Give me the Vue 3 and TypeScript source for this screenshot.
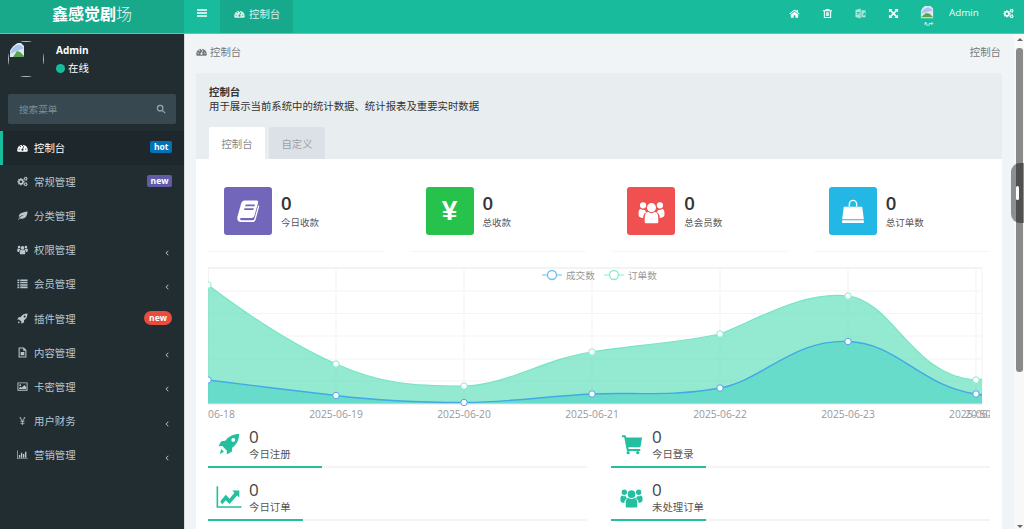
<script setup lang="ts">
function gear(cx: number, cy: number, r: number, teeth: number): string {
  const pts: string[] = [];
  const n = teeth * 4;
  for (let i = 0; i < n; i++) {
    const a = (i / n) * Math.PI * 2 - Math.PI / n;
    const rad = i % 4 < 2 ? r : r * 0.76;
    pts.push(`${(cx + rad * Math.cos(a)).toFixed(2)} ${(cy + rad * Math.sin(a)).toFixed(2)}`);
  }
  const h = r * 0.36;
  return `M${pts.join('L')}Z M${cx - h} ${cy}a${h} ${h} 0 1 0 ${2 * h} 0a${h} ${h} 0 1 0 ${-2 * h} 0Z`;
}

const icons: Record<string, string> = {
  dashboard:
    'M.5 17.500a11.500 11.500 0 1 1 23 0c0 1.800-.5 3.500-1.500 3.500H2C1 21 .5 19.300.5 17.500z M3.300 15.500a1.400 1.400 0 1 0 2.800 0 1.400 1.400 0 1 0-2.800 0z M5.800 10a1.400 1.400 0 1 0 2.800 0 1.400 1.400 0 1 0-2.800 0z M10.600 7.500a1.400 1.400 0 1 0 2.800 0 1.400 1.400 0 1 0-2.800 0z M17.900 15.500a1.400 1.400 0 1 0 2.800 0 1.400 1.400 0 1 0-2.800 0z M9.700 17a2.300 2.300 0 0 0 4.600 0c0-.9-.5-1.600-1.100-2l2.600-5.800-1.400-.6-2.600 6.100A2.300 2.300 0 0 0 9.700 17z',
  cogs: `${gear(8.5, 12.5, 8, 8)} ${gear(19, 6, 4.5, 6)} ${gear(19, 18, 4.5, 6)}`,
  leaf: 'M2.500 21C4 17.500 8 13.500 15 11 9.500 11.500 6 14 4.200 16 2.800 8.500 11 5 23 3.500 22.500 12 19 19 11 19c-2 0-3.700-.5-5-1.200L4 21.500z',
  group:
    'M8 8.500a4 4 0 1 0 8 0 4 4 0 1 0-8 0z M1.700 6.500a2.800 2.800 0 1 0 5.600 0 2.800 2.800 0 1 0-5.600 0z M16.700 6.500a2.800 2.800 0 1 0 5.600 0 2.800 2.800 0 1 0-5.600 0z M6 21.500v-4.200c0-3 1.400-4.800 3.200-4.800 1.600 1.300 4 1.300 5.600 0 1.800 0 3.200 1.800 3.200 4.800v4.200c0 .6-.5 1-1.500 1h-9c-1 0-1.500-.4-1.500-1z M.5 13c0-2 .8-3.200 2-3.200 1.100.9 2.400 1.200 3.700.8.200 1 .7 1.700 1.300 2.100-1.700.7-2.800 2.400-3 5C2 17.500.5 16.500.5 15z M23.500 13c0-2-.8-3.200-2-3.200-1.100.9-2.400 1.200-3.700.8-.2 1-.7 1.700-1.300 2.100 1.700.7 2.800 2.400 3 5 1.500-.2 4-1.200 4-2.700z',
  list: 'M1 3h4v3.500H1z M7 3h16v3.500H7z M1 8.200h4v3.500H1z M7 8.200h16v3.500H7z M1 13.400h4v3.500H1z M7 13.400h16v3.500H7z M1 18.600h4v3.500H1z M7 18.600h16v3.500H7z',
  rocket:
    'M23 1C16.500 1 11.500 3.500 8 8.500L3.500 9 .5 14.500l4.200-.2 5 5-.2 4.200L15 20.500l.5-4.500C20.500 12.500 23 7.500 23 1z M14.600 7.500a2.100 2.100 0 1 0 4.200 0 2.100 2.100 0 1 0-4.200 0z M3.500 17.500l3 3-4.500 2.500z',
  file: 'M3.500 1H15l5.500 5.500V23H3.500z M5.800 3.200v17.600h12.400V8H13.500V3.200z M8 11h8v7H8z',
  image:
    'M1 3h22v18H1z M3 5v14h18V5z M5 9a2 2 0 1 0 4 0 2 2 0 1 0-4 0z M4.500 17.500v-2l3.500-3 2.500 2 5.500-6 4 4.500v4.500z',
  chart: 'M.5 3H2v17.500h21.500V22H.5z M4 13h3v6H4z M8.500 8h3v11h-3z M13 11h3v8h-3z M17.500 6h3v13h-3z',
  bars: 'M2 4.500h20v3H2z M2 10.500h20v3H2z M2 16.500h20v3H2z',
  home: 'M12 3 .8 12.800l1.400 1.600L12 6l9.800 8.400 1.400-1.600L19.500 9.600V4.500h-3.200v2.300z M12 8 4 14.800V21.500h6v-5.500h4v5.500h6v-6.700z',
  trash:
    'M8.500 2h7L17 5h5v2.200h-2V22H4V7.200H2V5h5z M10 4.200 9.500 5h5L14 4.200z M6.300 7.200v12.600h11.400V7.200z M8.500 9.500h1.800v8H8.500z M13.700 9.500h1.800v8h-1.800z M11.100 9.500h1.800v8h-1.800z',
  language:
    'M1 4.500 12.500 1v22L1 19.500z M4 8.500v1.700h2.300c-.4 1.800-1.200 3-2.500 4l1 1.100c1.200-.9 2-2 2.600-3.200.5 1 1.200 2 2 2.600l.8-1.200c-.8-.7-1.500-1.500-1.900-2.800h1.500V8.500z M14 5h9v15h-9z M17.500 16.500h1.500l.4-1.500h1.700l.4 1.500h1.500L20.900 9h-1.500z',
  arrows:
    'M2 2h8L7.300 4.700 12 9.400l4.700-4.700L14 2h8v8l-2.700-2.700L14.600 12l4.700 4.700L22 14v8h-8l2.700-2.700L12 14.600l-4.700 4.700L10 22H2v-8l2.700 2.700L9.400 12 4.700 7.300 2 10z',
  search:
    'M10 2a8 8 0 1 0 0 16 8 8 0 0 0 0-16z M10 4.800a5.200 5.200 0 1 1 0 10.400 5.200 5.200 0 0 1 0-10.400z M15 16.800l1.900-1.900 6.100 6.100-1.900 1.900z',
  left: 'M14.500 6 8.500 12l6 6 1.300-1.200-4.800-4.800 4.800-4.800z',
  book: 'M8.500 1.500h12c1.300 0 2 1 1.600 2.300l-3.600 12.700c-.5 1.700-1.500 2.500-3.200 2.500H5.500c-1.900 0-1.900 2.200 0 2.200h11c1 0 1.600-.5 1.900-1.500L22.300 6.200l1 .9L19.700 20.400c-.5 1.700-1.800 2.700-3.400 2.700H5c-3 0-4.300-2.800-3.500-5.500L5 5c.6-2.200 1.800-3.500 3.500-3.500z M9.700 5.500l-.5 1.700h9.300l.5-1.700z M8.500 9.300 8 11h9.300l.5-1.700z',
  bag: 'M3.500 8H20.500L22 19.500H2z M8 8.500V5.500a4 4 0 0 1 8 0v3h-1.300V5.500a2.700 2.700 0 0 0-5.400 0v3z M2 20.500h20V23H2z',
  cart: 'M1 2.500h4l.8 2.500H23l-1.800 10.500H8l.4 2H21v2H6.500L3.500 4.500H1z M6 21.500a1.800 1.800 0 1 0 3.600 0 1.800 1.800 0 1 0-3.600 0z M16.500 21.500a1.800 1.800 0 1 0 3.600 0 1.800 1.800 0 1 0-3.600 0z',
  linechart:
    'M.5 2H2v18.500h21.500V22H.5z M4 16l5-6 3.500 3.500 4.500-5.500-2-2h6.500v6.500l-2-2-7 8-3.500-3.500-3.300 4z',
};

function rule(name: string): 'nonzero' | 'evenodd' {
  return name === 'group' ? 'nonzero' : 'evenodd';
}

interface MenuItem {
  label: string;
  icon?: string;
  glyph?: string;
  badge?: string;
  badgeClass?: string;
  caret?: boolean;
  active?: boolean;
}

const menu: MenuItem[] = [
  { label: '控制台', icon: 'dashboard', badge: 'hot', badgeClass: 'blue', active: true },
  { label: '常规管理', icon: 'cogs', badge: 'new', badgeClass: 'violet' },
  { label: '分类管理', icon: 'leaf' },
  { label: '权限管理', icon: 'group', caret: true },
  { label: '会员管理', icon: 'list', caret: true },
  { label: '插件管理', icon: 'rocket', badge: 'new', badgeClass: 'pill' },
  { label: '内容管理', icon: 'file', caret: true },
  { label: '卡密管理', icon: 'image', caret: true },
  { label: '用户财务', glyph: '¥', caret: true },
  { label: '营销管理', icon: 'chart', caret: true },
];

const topIcons = ['home', 'trash', 'language', 'arrows'];

const stats = [
  { label: '今日收款', icon: 'book', color: 'purple' },
  { label: '总收款', glyph: '¥', color: 'green' },
  { label: '总会员数', icon: 'group', color: 'red' },
  { label: '总订单数', icon: 'bag', color: 'sky' },
];

const minis = [
  { label: '今日注册', icon: 'rocket', bar: 114 },
  { label: '今日登录', icon: 'cart', bar: 95 },
  { label: '今日订单', icon: 'linechart', bar: 95 },
  { label: '未处理订单', icon: 'group', bar: 95 },
];

// chart coordinates: reference x − 208, y − 267
const xs = [0, 128, 256, 384, 512, 640, 768];
const green = [18, 97, 119, 85, 67, 29, 113];
const blue = [113, 128.5, 135.5, 127, 121, 74.5, 127];
const base = 137;

const greenLine =
  'M0 18 C45 52 85 78 128 97 C173 117 205 119 256 119 C300 118 335 92 384 85 C410 80 470 76 512 67 C550 52 595 24 640 29 C685 34 705 110 768 113 L774 112';
const blueLine =
  'M0 113 C40 118 90 124 128 128.5 C165 133 200 135.5 256 135.5 C300 135.5 340 129 384 127 C420 125 465 130 512 121 C555 113 585 72 640 74.5 C690 76 710 118 768 127 L774 128';
const greenArea = `${greenLine} L774 ${base} L0 ${base} Z`;
const blueArea = `${blueLine} L774 ${base} L0 ${base} Z`;
const hLines = [24, 46.5, 69, 92, 114];
const vLines = [128, 256, 384, 512, 640, 768];
const dateLabels = ['2025-06-19', '2025-06-20', '2025-06-21', '2025-06-22', '2025-06-23'];
</script>

<template>
  <div class="page">
    <header class="topbar">
      <div class="logo"><b>鑫感觉剧</b><span>场</span></div>
      <nav class="topnav">
        <button class="toggle" type="button">
          <svg class="icon" viewBox="0 0 24 24"><path :d="icons.bars" /></svg>
        </button>
        <div class="toptab">
          <svg class="icon" viewBox="0 0 24 24"><path :d="icons.dashboard" fill-rule="evenodd" /></svg>
          <span>控制台</span>
        </div>
        <div class="topright">
          <svg
            v-for="name in topIcons"
            :key="name"
            class="icon topicon"
            :class="{ tinted: name === 'language' }"
            viewBox="0 0 24 24"
          >
            <path :d="icons[name]" fill-rule="evenodd" />
          </svg>
          <div class="topavatar">
            <svg viewBox="0 0 16 16" class="broken small">
              <path d="M1 1h11l3 3v11H1z" fill="#dfe8f5" />
              <path d="M1 14l6-5 4 1 4 4z" fill="#5aa34a" />
              <path d="M1 10c2-5 6-8 10-7l4 3" fill="#a9c6ee" />
            </svg>
            <span class="alt">Adm</span>
          </div>
          <span class="topname">Admin</span>
          <svg class="icon topicon cog" viewBox="0 0 24 24"><path :d="icons.cogs" fill-rule="evenodd" /></svg>
        </div>
      </nav>
    </header>

    <div class="main">
      <aside class="sidebar">
        <div class="user">
          <div class="avatar">
            <div class="avatar-frame">
              <svg viewBox="0 0 16 16" class="broken">
                <path d="M1 1h11l3 3v11H1z" fill="#dfe8f5" />
                <path d="M4 15l4-6 3 1 4 4v1z" fill="#5aa34a" />
                <path d="M1 12c2-6 6-10 10-9l4 3" fill="#a9c6ee" />
              </svg>
            </div>
          </div>
          <div class="uinfo">
            <div class="uname">Admin</div>
            <div class="ustate"><i class="dot"></i>在线</div>
          </div>
        </div>
        <div class="search">
          <span>搜索菜单</span>
          <svg class="icon" viewBox="0 0 24 24"><path :d="icons.search" fill-rule="evenodd" /></svg>
        </div>
        <ul class="menu">
          <li v-for="m in menu" :key="m.label" :class="{ active: m.active }">
            <span class="micon">
              <svg v-if="m.icon" class="icon" viewBox="0 0 24 24"><path :d="icons[m.icon]" :fill-rule="rule(m.icon)" /></svg>
              <b v-else>{{ m.glyph }}</b>
            </span>
            <span class="mlabel">{{ m.label }}</span>
            <span v-if="m.badge" class="badge" :class="m.badgeClass">{{ m.badge }}</span>
            <svg v-if="m.caret" class="icon caret" viewBox="0 0 24 24"><path :d="icons.left" /></svg>
          </li>
        </ul>
      </aside>

      <main class="content">
        <div class="crumbs">
          <div class="crumb-left">
            <svg class="icon" viewBox="0 0 24 24"><path :d="icons.dashboard" fill-rule="evenodd" /></svg>
            <span>控制台</span>
          </div>
          <span>控制台</span>
        </div>

        <section class="panel">
          <div class="panel-head">
            <div class="ptitle">控制台</div>
            <div class="pdesc">用于展示当前系统中的统计数据、统计报表及重要实时数据</div>
            <div class="tabs">
              <span class="tab on">控制台</span>
              <span class="tab">自定义</span>
            </div>
          </div>
          <div class="panel-body">
            <div class="stats">
              <div v-for="s in stats" :key="s.label" class="stat">
                <div class="sbox" :class="s.color">
                  <svg v-if="s.icon" class="icon" :class="'s-' + s.icon" viewBox="0 0 24 24"><path :d="icons[s.icon]" :fill-rule="rule(s.icon)" /></svg>
                  <b v-else>{{ s.glyph }}</b>
                </div>
                <div>
                  <div class="snum">0</div>
                  <div class="slabel">{{ s.label }}</div>
                </div>
              </div>
            </div>

            <svg class="chart" viewBox="0 0 782 155" width="782" height="155">
              <rect x="0" y="0" width="774" height="2" fill="#f3f3f3" />
              <rect x="0" y="0" width="1" height="137" fill="#f3f3f3" />
              <rect x="773.5" y="0" width="1" height="137" fill="#f3f3f3" />
              <line v-for="y in hLines" :key="'h' + y" x1="0" x2="774" :y1="y" :y2="y" stroke="#f3f3f3" stroke-width="1" />
              <line v-for="x in vLines" :key="'v' + x" :x1="x" :x2="x" y1="0" y2="137" stroke="#f3f3f3" stroke-width="1" />
              <path :d="greenArea" fill="#62e0bb" fill-opacity=".68" />
              <path :d="blueArea" fill="#3fcfc4" fill-opacity=".52" />
              <path :d="greenLine" fill="none" stroke="#74e4c4" stroke-width="1.2" />
              <path :d="blueLine" fill="none" stroke="#42a8e6" stroke-width="1.4" />
              <line x1="0" x2="774" y1="137" y2="137" stroke="#e3e6e8" stroke-width="1" />
              <circle v-for="(y, i) in green" :key="'g' + i" :cx="xs[i]" :cy="y" r="3.2" fill="#fff" stroke="#8beccd" />
              <circle v-for="(y, i) in blue" :key="'b' + i" :cx="xs[i]" :cy="y" r="3.2" fill="#fff" stroke="#4aa8e8" />
              <g class="legend">
                <line x1="334" x2="354" y1="8" y2="8" stroke="#6cc0f0" />
                <circle cx="344" cy="8" r="4.5" fill="#fff" stroke="#6cc0f0" stroke-width="1.3" />
                <text x="358" y="11.5">成交数</text>
                <line x1="396" x2="416" y1="8" y2="8" stroke="#8beccd" />
                <circle cx="406" cy="8" r="4.5" fill="#fff" stroke="#8beccd" stroke-width="1.3" />
                <text x="420" y="11.5">订单数</text>
              </g>
              <g class="axis">
                <text x="0" y="151">06-18</text>
                <text v-for="(d, i) in dateLabels" :key="d" :x="xs[i + 1]" y="151" text-anchor="middle">{{ d }}</text>
                <text x="741" y="151">2025-06-</text>
                <text x="757" y="151">20:50:</text>
              </g>
            </svg>

            <div class="minis">
              <div v-for="m in minis" :key="m.label" class="mini">
                <div class="mrow">
                  <span class="mi"><svg class="icon" :class="'m-' + m.icon" viewBox="0 0 24 24"><path :d="icons[m.icon]" :fill-rule="rule(m.icon)" /></svg></span>
                  <div>
                    <div class="mnum">0</div>
                    <div class="mtext">{{ m.label }}</div>
                  </div>
                </div>
                <div class="track"><div class="fill" :style="{ width: m.bar + 'px' }"></div></div>
              </div>
            </div>
          </div>
        </section>
      </main>

      <div class="scrollbar">
        <i class="up"></i>
        <div class="thumb"></div>
        <div class="rest"></div>
        <i class="down"></i>
      </div>
      <div class="handle"><i></i></div>
    </div>
  </div>
</template>

<style scoped>
.page {
  width: 1024px;
  height: 529px;
  display: flex;
  flex-direction: column;
  overflow: hidden;
  font-family: "Open Sans", "Noto Sans CJK SC", sans-serif;
  font-size: 10.4px;
  color: #333;
  background: #f1f4f6;
}
.icon {
  width: 11px;
  height: 11px;
  fill: currentColor;
  display: block;
  flex: none;
}
.topbar {
  display: flex;
  height: 34px;
  box-sizing: border-box;
  flex: none;
  border-bottom: 1px solid #4fcdb5;
  color: #fff;
}
.logo {
  width: 184px;
  background: #18a98b;
  display: flex;
  align-items: center;
  justify-content: center;
  font-size: 16px;
  padding-bottom: 8px;
  box-sizing: border-box;
}
.logo b {
  font-weight: 700;
}
.logo span {
  font-weight: 300;
  opacity: 0.9;
}
.topnav {
  flex: 1;
  display: flex;
  align-items: stretch;
  background: #18bc9c;
}
.toggle {
  width: 36px;
  padding: 0 0 8px;
  border: 0;
  background: transparent;
  color: #fff;
  display: flex;
  align-items: center;
  justify-content: center;
}
.toggle .icon {
  width: 12px;
  height: 12px;
}
.toptab {
  width: 73px;
  background: #17a98c;
  display: flex;
  align-items: center;
  gap: 4px;
  padding: 0 0 7px 14px;
  box-sizing: border-box;
  color: #d6f2ec;
}
.topright {
  margin-left: auto;
  display: flex;
  align-items: center;
  padding-bottom: 7px;
}
.topicon {
  margin-right: 22px;
}
.tinted {
  color: #a9e6d9;
}
.topavatar {
  width: 17px;
  height: 21px;
  border-radius: 50%;
  overflow: hidden;
  margin: 5px 12px 0 -1px;
  position: relative;
  color: #fff;
}
.broken {
  width: 16px;
  height: 16px;
  display: block;
}
.broken.small {
  width: 14px;
  height: 14px;
}
.alt {
  position: absolute;
  left: 3px;
  top: 14px;
  font-size: 8px;
  line-height: 9px;
}
.topname {
  font-size: 9.8px;
  width: 30px;
  margin: 0 24px 2px 0;
  color: #f0fbf8;
}
.cog {
  margin-right: 10px;
}
.main {
  flex: 1;
  min-height: 0;
  display: flex;
  position: relative;
}
.sidebar {
  width: 185px;
  flex: none;
  background: #222d32;
  color: #b8c7ce;
  border-right: 1px solid #d8dcdf;
  box-sizing: border-box;
}
.user {
  height: 60px;
  display: flex;
  padding: 7px 8px 0;
  box-sizing: border-box;
}
.avatar {
  width: 36px;
  height: 36px;
  border-radius: 50%;
  overflow: hidden;
  margin-right: 12px;
  flex: none;
}
.avatar-frame {
  width: 36px;
  height: 36px;
  box-sizing: border-box;
  border: 1px solid #b4bcc0;
}
.uname {
  color: #fff;
  font-weight: 700;
  font-size: 10px;
  line-height: 14px;
  margin-top: 2px;
}
.ustate {
  display: flex;
  align-items: center;
  color: #fff;
  margin-top: 4px;
  line-height: 14px;
}
.dot {
  width: 9px;
  height: 9px;
  border-radius: 50%;
  background: #18bc9c;
  margin-right: 3px;
}
.search {
  margin: 0 8px;
  height: 30px;
  background: #374850;
  border-radius: 2px;
  display: flex;
  align-items: center;
  justify-content: space-between;
  padding: 0 10px 0 11px;
  color: #7f8d94;
  font-size: 9.6px;
}
.search .icon {
  width: 10px;
  height: 10px;
  color: #9aa7ad;
}
.menu {
  list-style: none;
  margin: 7px 0 0;
  padding: 0;
}
.menu li {
  height: 34.2px;
  display: flex;
  align-items: center;
  padding: 0 12px 2px 14px;
  box-sizing: border-box;
  border-left: 3px solid transparent;
}
.menu li.active {
  background: #1e282c;
  border-left-color: #18bc9c;
  color: #fff;
}
.micon {
  width: 11px;
  margin-right: 6px;
  display: flex;
  justify-content: center;
  flex: none;
}
.micon b {
  font-weight: 400;
  font-size: 11px;
}
.mlabel {
  flex: 1;
}
.badge {
  font-size: 8.5px;
  font-weight: 700;
  color: #fff;
  line-height: 12px;
  padding: 0 3.5px;
  border-radius: 2px;
}
.badge.blue {
  background: #0073b7;
}
.badge.violet {
  background: #605ca8;
}
.badge.pill {
  background: #e74c3c;
  border-radius: 7px;
  line-height: 14px;
  padding: 0 5px;
}
.caret {
  width: 10px;
  height: 10px;
  margin-top: 6px;
}
.content {
  flex: 1;
  min-width: 0;
  padding-left: 11px;
  overflow: hidden;
}
.crumbs {
  width: 806px;
  height: 39px;
  box-sizing: border-box;
  display: flex;
  align-items: center;
  justify-content: space-between;
  color: #777;
  padding: 0 1px 5px 0;
}
.crumb-left {
  display: flex;
  align-items: center;
  gap: 3px;
}
.panel {
  width: 806px;
}
.panel-head {
  background: #e8edf0;
  height: 86px;
  padding: 13px 12px 0 13px;
  box-sizing: border-box;
  border-radius: 2px 2px 0 0;
}
.ptitle {
  font-weight: 700;
  line-height: 13px;
}
.pdesc {
  line-height: 15px;
}
.tabs {
  display: flex;
  gap: 4px;
  margin-top: 13px;
}
.tab {
  width: 56px;
  height: 32px;
  display: flex;
  align-items: center;
  justify-content: center;
  background: #dce1e7;
  color: #9aa3ab;
  border-radius: 2px 2px 0 0;
}
.tab.on {
  background: #fff;
  color: #888;
}
.panel-body {
  background: #fff;
  padding: 0 12px;
  height: 400px;
}
.stats {
  display: grid;
  grid-template-columns: repeat(4, 177px);
  column-gap: 24.6px;
  padding-top: 28px;
}
.stat {
  height: 65px;
  display: flex;
  gap: 9px;
  padding-left: 16px;
  box-sizing: border-box;
  border-bottom: 1px solid #f4f4f4;
  border-radius: 0 0 3px 3px;
}
.sbox {
  width: 48px;
  height: 48px;
  border-radius: 3px;
  color: #fff;
  display: flex;
  align-items: center;
  justify-content: center;
  flex: none;
}
.sbox .icon {
  width: 26px;
  height: 26px;
}
.sbox .s-book {
  width: 24px;
  height: 24px;
}
.sbox .s-group {
  width: 27px;
  height: 27px;
}
.sbox b {
  font-size: 28px;
  line-height: 1;
  font-family: "Liberation Sans", sans-serif;
}
.purple {
  background: #7266ba;
}
.green {
  background: #27c24c;
}
.red {
  background: #f05050;
}
.sky {
  background: #23b7e5;
}
.snum {
  font-size: 18.5px;
  font-weight: 600;
  color: #333;
  line-height: 26px;
  margin-top: 3px;
}
.slabel {
  font-size: 9.5px;
  color: #555;
  line-height: 13px;
}
.chart {
  display: block;
  margin-top: 15px;
  overflow: hidden;
}
.legend text {
  font-size: 9.6px;
  fill: #999;
}
.axis text {
  font-size: 10.3px;
  fill: #999;
}
.minis {
  display: grid;
  grid-template-columns: 379px 379px;
  column-gap: 24px;
}
.mini {
  height: 53px;
}
.mrow {
  display: flex;
  height: 44px;
  align-items: center;
}
.mi {
  width: 41px;
  display: flex;
  justify-content: center;
  color: #24bf9f;
  flex: none;
}
.mi .icon {
  width: 22px;
  height: 22px;
}
.mi .m-linechart {
  width: 26px;
  height: 26px;
}
.mi .m-group {
  width: 23px;
  height: 23px;
}
.mnum {
  font-size: 17px;
  line-height: 19px;
  color: #444;
}
.mtext {
  line-height: 15px;
  color: #555;
  padding-top: 1px;
}
.track {
  height: 2px;
  background: #f4f4f4;
}
.fill {
  height: 2px;
  background: #24bf9f;
}
.scrollbar {
  width: 10px;
  flex: none;
  background: #f8f8f8;
  display: flex;
  flex-direction: column;
  align-items: center;
  padding: 4px 0 0 1px;
  box-sizing: border-box;
}
.up,
.down {
  width: 0;
  height: 0;
  border-left: 3px solid transparent;
  border-right: 3px solid transparent;
}
.up {
  border-bottom: 3px solid #666;
}
.down {
  border-top: 3px solid #666;
  margin-bottom: 1px;
}
.thumb {
  width: 6.5px;
  height: 324px;
  margin-top: 7px;
  background: #8a8a8a;
  border-radius: 3px;
}
.rest {
  flex: 1;
}
.handle {
  position: absolute;
  right: 0;
  top: 129px;
  width: 13px;
  height: 60px;
  background: rgba(0, 0, 0, 0.42);
  border-radius: 9px 0 0 9px;
  display: flex;
  align-items: center;
  padding-left: 5px;
  box-sizing: border-box;
}
.handle i {
  width: 3px;
  height: 14px;
  background: #fff;
  border-radius: 2px;
}
</style>

<style>
html,
body {
  margin: 0;
  overflow: hidden;
}
</style>
